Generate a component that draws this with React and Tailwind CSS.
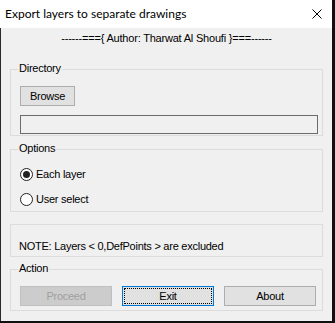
const font = { fontFamily: '"Liberation Sans", Arial, sans-serif' };

function GroupBox({ label, className, children }) {
  return (
    <div className={`relative mx-[9px] border border-[#dcdcdc] ${className}`}>
      {label && (
        <span className="absolute left-[7px] top-[-8px] bg-[#f0f0f0] px-[1px] text-[11px] leading-[13px] tracking-[-0.25px] text-black">
          {label}
        </span>
      )}
      {children}
    </div>
  );
}

function Button({ children, className = "", disabled, focused }) {
  if (disabled) {
    return (
      <div className={`h-[20px] flex items-center justify-center border border-[#bfbfbf] bg-[#cccccc] text-[11px] tracking-[-0.25px] text-[#a0a0a0] ${className}`}>
        {children}
      </div>
    );
  }
  if (focused) {
    return (
      <div className={`h-[20px] border border-[#0078d7] bg-[#e1e1e1] p-[1px] ${className}`}>
        <div className="h-full flex items-center justify-center border border-dotted border-black text-[11px] tracking-[-0.25px] text-black">
          {children}
        </div>
      </div>
    );
  }
  return (
    <div className={`h-[20px] flex items-center justify-center border border-[#adadad] bg-[#e1e1e1] text-[11px] tracking-[-0.25px] text-black ${className}`}>
      {children}
    </div>
  );
}

function Radio({ checked, label }) {
  return (
    <div className="flex items-center h-[16px]">
      <div className="w-[13px] h-[13px] rounded-full border border-[#222] bg-white flex items-center justify-center">
        {checked && <div className="w-[7px] h-[7px] rounded-full bg-[#222]" />}
      </div>
      <span className="ml-[3px] text-[11px] leading-[13px] tracking-[-0.25px] text-black">{label}</span>
    </div>
  );
}

export default function App() {
  return (
    <div className="w-[335px] h-[323px] bg-[#101010] overflow-hidden" style={font}>
      <div className="w-[332px] h-[321px] flex flex-col">
        <div className="h-[28px] bg-white flex items-center justify-between pl-[5px] pr-[10px]">
          <span className="text-[12px] text-black" style={{ fontFamily: 'Lato, "Noto Sans", sans-serif' }}>
            Export layers to separate drawings
          </span>
          <svg width="10" height="10" viewBox="0 0 10 10">
            <path d="M0.5 0.5 L9.5 9.5 M9.5 0.5 L0.5 9.5" stroke="#000" strokeWidth="1" />
          </svg>
        </div>

        <div className="flex-1 bg-[#f0f0f0] border-l border-[#2a2a2a] flex flex-col">
          <div className="mt-[4px] text-center text-[11px] leading-[13px] tracking-[-0.2px] text-black">
            ------==={"{"} Author: Tharwat Al Shoufi {"}"}===------
          </div>

          <GroupBox label="Directory" className="mt-[24px] h-[67px] pt-[16px] pl-[9px]">
            <Button className="w-[55px]">Browse</Button>
            <div className="mt-[9px] w-[298px] h-[19px] border border-[#6b6b6b] bg-[#f0f0f0]" />
          </GroupBox>

          <GroupBox label="Options" className="mt-[13px] h-[63px] pt-[16px] pl-[9px] flex flex-col gap-[9px]">
            <Radio checked label="Each layer" />
            <Radio label="User select" />
          </GroupBox>

          <GroupBox className="mt-[12px] h-[33px] pt-[15px] pl-[8px]">
            <div className="text-[11px] leading-[13px] tracking-[-0.25px] text-black">
              NOTE: Layers &lt; 0,DefPoints &gt; are excluded
            </div>
          </GroupBox>

          <GroupBox label="Action" className="mt-[12px] h-[42px] pt-[16px] pl-[9px] flex gap-[10px]">
            <Button disabled className="w-[92px]">Proceed</Button>
            <Button focused className="w-[92px]">Exit</Button>
            <Button className="w-[92px]">About</Button>
          </GroupBox>
        </div>
      </div>
    </div>
  );
}
